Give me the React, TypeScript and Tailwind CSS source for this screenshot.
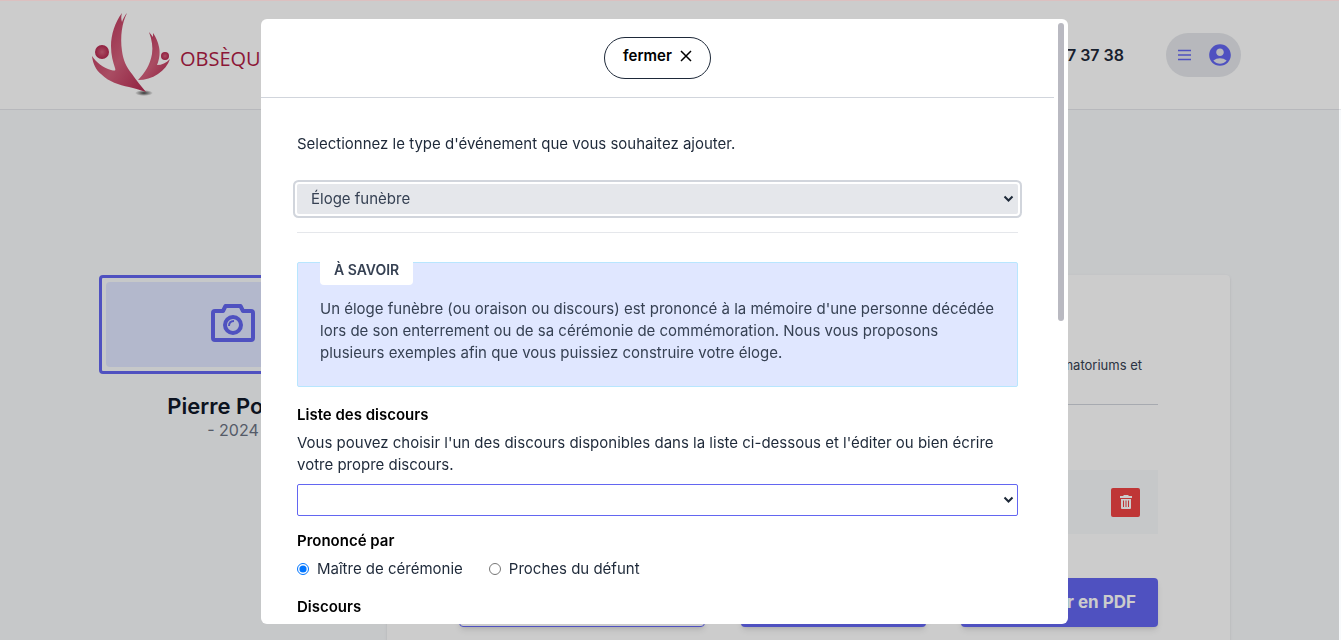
import { useState } from 'react';
import { MdAccountCircle } from 'react-icons/md';

const Logo = () => (
  <svg width="82" height="88" viewBox="0 0 82 88" aria-hidden="true">
    <defs>
      <linearGradient id="petal" x1="0" y1="0" x2="1" y2="1">
        <stop offset="0" stopColor="#b5274f" />
        <stop offset="0.55" stopColor="#d4607c" />
        <stop offset="1" stopColor="#b5274f" />
      </linearGradient>
      <radialGradient id="ball">
        <stop offset="0" stopColor="#d4607c" />
        <stop offset="1" stopColor="#b5274f" />
      </radialGradient>
      <radialGradient id="shade">
        <stop offset="0" stopColor="#444" />
        <stop offset="1" stopColor="#444" stopOpacity="0" />
      </radialGradient>
    </defs>
    <ellipse cx="54" cy="82" rx="9" ry="3" fill="url(#shade)" />
    <path
      d="M32 2C25 11 21 24 21 35C21 44 23 51 25 57C26 60 25 60 21 59C13 57 6 51 2 45C3 53 6 59 11 63C19 71 29 74 39 76C46 78 51 79 56 81C51 75 46 69 42 63C36 56 33 48 32 40C30 25 32 12 37 2C35 4 33 8 32 11C31 8 31 5 32 2Z"
      fill="url(#petal)"
    />
    <path
      d="M59 21C62 29 63 36 62 43C60 54 55 62 48 69C55 69 62 67 68 63C74 59 78 54 80 48C76 52 72 54 67 54C70 47 70 40 69 36C68 31 66 26 63 22L63 26Z"
      fill="url(#petal)"
    />
    <circle cx="12" cy="41" r="7" fill="url(#ball)" />
    <circle cx="75" cy="45" r="4" fill="url(#ball)" />
  </svg>
);

const CameraIcon = () => (
  <svg width="44" height="38" viewBox="0 0 44 38" fill="none" stroke="currentColor" strokeWidth="4" strokeLinejoin="round" aria-hidden="true">
    <path d="M4 7H12L14.500 2H29.500L32 7H40Q42 7 42 9V34Q42 36 40 36H4Q2 36 2 34V9Q2 7 4 7Z" />
    <circle cx="22" cy="21" r="8" />
    <path d="M18 22Q18 17 23 17" strokeWidth="2" />
  </svg>
);

const TrashIcon = () => (
  <svg width="14" height="16" viewBox="0 0 14 16" fill="currentColor" aria-hidden="true">
    <path d="M5 1h4l1 1h3v2H1V2h3z" />
    <path fillRule="evenodd" d="M2 5h10v9a1 1 0 0 1-1 1H3a1 1 0 0 1-1-1zM4 6.500v6.500h1V6.500zM6.500 6.500v6.500h1V6.500zM9 6.500v6.500h1V6.500z" />
  </svg>
);

const Chevron = () => (
  <svg className="pointer-events-none absolute right-1 top-1/2 -translate-y-1/2" width="11" height="8" viewBox="0 0 11 8" fill="none" stroke="currentColor" strokeWidth="2" aria-hidden="true">
    <path d="M1.500 1.500L5.500 5.500L9.500 1.500" />
  </svg>
);

const Header = () => (
  <header className="h-[110px] bg-white border-b border-gray-200 pr-3">
    <div className="h-full max-w-[1153px] mx-auto flex items-center justify-between">
      <a href="#" className="flex items-center gap-2 pl-0.5">
        <Logo />
        <span className="font-['Open_Sans',sans-serif] text-xl font-medium text-[#b01c45] pt-2">OBSÈQUES</span>
      </a>
      <div className="flex items-center gap-[42px]">
        <a href="tel:0184173738" className="font-semibold text-gray-800">01 84 17 37 38</a>
        <button type="button" aria-label="Menu" className="flex items-center gap-4 h-11 pl-3 pr-2 rounded-full bg-gray-200 text-[#6366f1]">
          <svg width="13" height="12" viewBox="0 0 13 12" stroke="currentColor" strokeWidth="1.500" aria-hidden="true">
            <path d="M0 1.500H13M0 6H13M0 10.500H13" />
          </svg>
          <MdAccountCircle size={26} />
        </button>
      </div>
    </div>
  </header>
);

const Ceremony = () => (
  <main className="pr-3">
    <div className="max-w-[1131px] mx-auto pt-[165px] flex gap-5">
      <aside className="w-[268px] shrink-0 text-center">
        <button type="button" aria-label="Ajouter une photo" className="block w-full p-1 border-3 border-[#6366f1] rounded">
          <span className="flex h-[85px] items-center justify-center pb-1 rounded-sm bg-indigo-100 text-[#6366f1]">
            <CameraIcon />
          </span>
        </button>
        <h1 className="mt-5 text-[22px] leading-6 font-semibold text-gray-900">Pierre Poirot</h1>
        <p className="text-base leading-6 text-gray-500">- 2024</p>
      </aside>
      <section className="flex-1 bg-white px-[72px] pt-20 pb-20 rounded-sm shadow-sm">
        <p className="text-[13px] leading-5 pr-4 text-right text-gray-700">Crématoriums et</p>
        <hr className="mt-[29px] border-gray-300" />
        <div className="mt-[65px] h-16 flex items-center justify-end pr-[18px] bg-slate-50">
          <button type="button" aria-label="Supprimer" className="size-[29px] flex items-center justify-center rounded-xs bg-[#ef4444] text-white">
            <TrashIcon />
          </button>
        </div>
        <div className="mt-11 flex justify-between text-base font-bold">
          <button type="button" className="h-[49px] w-[246px] rounded border border-[#6366f1] text-[#6366f1] shadow-md">Ajouter</button>
          <button type="button" className="h-[49px] w-[185px] rounded bg-[#6366f1] text-white shadow-md">Partager</button>
          <button type="button" className="h-[49px] w-[197px] pr-[22px] text-right text-[17px] whitespace-nowrap rounded bg-[#6366f1] text-white shadow-md">Exporter en PDF</button>
        </div>
      </section>
    </div>
  </main>
);

const EventModal = () => {
  const [eventType, setEventType] = useState('eloge');
  const [speech, setSpeech] = useState('');
  const [speaker, setSpeaker] = useState('maitre');

  return (
    <div className="fixed inset-0 flex justify-center pt-[19px] pb-4 pr-3">
      <div role="dialog" aria-modal="true" className="relative w-full max-w-[807px] bg-white rounded-md overflow-hidden">
        <div className="h-full overflow-y-auto [scrollbar-width:none] pr-3.5">
          <div className="flex justify-center py-[18px] border-b border-gray-300">
            <button type="button" className="h-[42px] px-[18px] pb-1 flex items-center gap-2 rounded-full border border-gray-800 text-[15px] font-semibold text-black">
              fermer
              <svg width="12" height="12" viewBox="0 0 12 12" stroke="currentColor" strokeWidth="1.500" aria-hidden="true">
                <path d="M1 1L11 11M11 1L1 11" />
              </svg>
            </button>
          </div>

          <div className="px-9 pt-[35px] text-[15px] leading-[22px] text-gray-800">
            <label htmlFor="type" className="block">Selectionnez le type d'événement que vous souhaitez ajouter.</label>
            <div className="relative mt-[29px]">
              <select
                id="type"
                value={eventType}
                onChange={(e) => setEventType(e.target.value)}
                className="block w-full h-[30px] pl-3.5 appearance-none rounded-xs bg-gray-200 text-gray-700 ring-2 ring-gray-300 ring-offset-2"
              >
                <option value="eloge">Éloge funèbre</option>
              </select>
              <Chevron />
            </div>
            <hr className="mt-[18px] border-gray-200" />

            <div className="mt-[29px] px-[22px] pb-[22px] rounded-xs border border-sky-200 bg-indigo-100 text-gray-700">
              <h2 className="-mt-0.5 w-fit h-6 px-3.5 text-sm leading-[18px] rounded-b-sm bg-white font-semibold">À SAVOIR</h2>
              <p className="mt-[13px]">
                Un éloge funèbre (ou oraison ou discours) est prononcé à la mémoire d'une personne décédée
                lors de son enterrement ou de sa cérémonie de commémoration. Nous vous proposons
                plusieurs exemples afin que vous puissiez construire votre éloge.
              </p>
            </div>

            <label htmlFor="speech" className="block mt-[17px] font-semibold text-black">Liste des discours</label>
            <p className="mt-1.5">
              Vous pouvez choisir l'un des discours disponibles dans la liste ci-dessous et l'éditer ou bien écrire
              votre propre discours.
            </p>
            <div className="relative mt-2">
              <select
                id="speech"
                value={speech}
                onChange={(e) => setSpeech(e.target.value)}
                className="block w-full h-8 px-3.5 appearance-none rounded-xs border border-[#6366f1] bg-white text-black"
              >
                <option value=""></option>
              </select>
              <Chevron />
            </div>

            <fieldset className="mt-3.5">
              <legend className="font-semibold text-black">Prononcé par</legend>
              <div className="mt-1.5 flex gap-[26px]">
                <label className="flex items-center gap-2">
                  <input type="radio" name="speaker" className="size-3" checked={speaker === 'maitre'} onChange={() => setSpeaker('maitre')} />
                  Maître de cérémonie
                </label>
                <label className="flex items-center gap-2">
                  <input type="radio" name="speaker" className="size-3" checked={speaker === 'proches'} onChange={() => setSpeaker('proches')} />
                  Proches du défunt
                </label>
              </div>
            </fieldset>

            <label htmlFor="text" className="block mt-4 font-semibold text-black">Discours</label>
            <textarea id="text" rows={8} className="block w-full mt-2 mb-9 p-3 rounded-xs border border-[#6366f1]" />
          </div>
        </div>
        <div className="absolute right-1 top-1 h-[298px] w-1.5 rounded-full bg-[#b9b9c1]" />
      </div>
    </div>
  );
};

export default function App() {
  return (
    <div className="h-screen overflow-hidden bg-slate-50 font-['Inter',sans-serif]">
      <Header />
      <Ceremony />
      <div className="fixed inset-y-0 left-0 right-0.5 bg-black/20 border-t border-red-300/30" />
      <EventModal />
    </div>
  );
}
